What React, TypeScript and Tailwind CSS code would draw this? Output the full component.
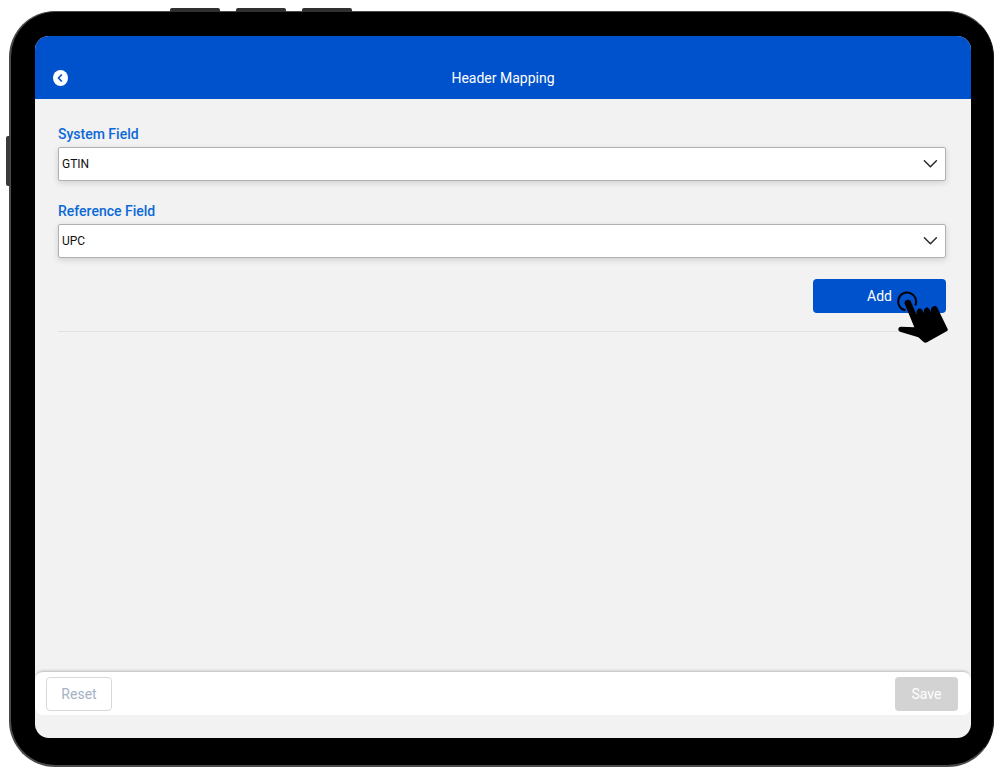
import React, { useId, useState } from 'react';

type SelectFieldProps = {
  label: string;
  value: string;
  options: string[];
  onChange: (value: string) => void;
};

const SYSTEM_FIELDS = ['GTIN', 'Description', 'Quantity'];
const REFERENCE_FIELDS = ['UPC', 'Item Name', 'Count'];

const BackIcon = () => (
  <svg viewBox="0 0 15 16" className="h-4 w-[15px]" aria-hidden="true">
    <ellipse cx="7.5" cy="8" rx="7.5" ry="8" fill="#fff" />
    <path d="M8.4 5 5.4 8l3 3" fill="none" stroke="#0052cc" strokeWidth="1.7" strokeLinecap="round" strokeLinejoin="round" />
  </svg>
);

const ChevronIcon = () => (
  <svg
    viewBox="0 0 16 8"
    className="pointer-events-none absolute right-2 top-1/2 h-2 w-4 -translate-y-1/2"
    aria-hidden="true"
  >
    <path d="M2.4 .8 8.4 6.8l6-6" fill="none" stroke="#2b2b2b" strokeWidth="1.5" strokeLinecap="round" strokeLinejoin="round" />
  </svg>
);

// Pointing hand that sits over the Add button
const TapCursor = () => (
  <svg
    viewBox="48 45 156 159"
    className="pointer-events-none absolute -right-0.5 top-[11px] h-[53px] w-[52px]"
    aria-hidden="true"
  >
    <path d="M76 106A27 27 0 1 1 106 91" fill="none" stroke="#000" strokeWidth="6" />
    <path
      d="M74 86C71 75 88 70 93 80L109 118C107 100 122 96 127 106L132 115C128 97 144 93 148 103L153 111C149 94 167 88 172 98L203 162Q204 167 200 169L141 202Q135 205 130 200L115 187L60 170Q54 168 55 161Q56 155 63 155L103 157Z"
      fill="#000"
    />
  </svg>
);

const SelectField = ({ label, value, options, onChange }: SelectFieldProps) => {
  const id = useId();
  return (
    <div className="flex flex-col gap-0.5">
      <label htmlFor={id} className="text-sm leading-[22px] font-medium text-[#0b69d8]">
        {label}
      </label>
      <div className="relative">
        <select
          id={id}
          value={value}
          onChange={(e) => onChange(e.target.value)}
          className="block h-[34px] w-full appearance-none rounded-xs border border-[#b0b0b0] bg-white pl-[3px] pr-8 text-xs text-[#111] shadow-[0_2px_6px_rgba(0,0,0,0.14)]"
        >
          {options.map((option) => (
            <option key={option}>{option}</option>
          ))}
        </select>
        <ChevronIcon />
      </div>
    </div>
  );
};

export default function App() {
  const [systemField, setSystemField] = useState('GTIN');
  const [referenceField, setReferenceField] = useState('UPC');

  return (
    <div className="flex min-h-screen bg-white pt-[11px] pr-1.5 pb-[7px] pl-[9px] font-['Roboto','Liberation_Sans',sans-serif]">
      <div className="relative flex flex-1 rounded-[46px] border-t border-l-2 border-b-2 border-[#4a4a4a] border-r border-r-[#141414] bg-black pt-6 pr-[22px] pb-[27px] pl-6">
        {/* Hardware buttons */}
        <div className="absolute -top-1 left-[159px] flex gap-4">
          <span className="h-1 w-[50px] rounded-t-xs bg-[#303030]" />
          <span className="h-1 w-[50px] rounded-t-xs bg-[#303030]" />
          <span className="h-1 w-[50px] rounded-t-xs bg-[#303030]" />
        </div>
        <span className="absolute top-[124px] -left-[5px] h-[50px] w-1 rounded-l-xs bg-[#3a3a3a]" />

        <div className="flex flex-1 flex-col overflow-hidden rounded-[14px] bg-[#f2f2f2]">
          <header className="grid h-[63px] grid-cols-[1fr_auto_1fr] items-center bg-[#0052cc] px-[18px] pt-5">
            <button type="button" aria-label="Back" className="justify-self-start">
              <BackIcon />
            </button>
            <h1 className="text-sm text-white">Header Mapping</h1>
          </header>

          <main className="flex-1 pt-6 pr-[25px] pl-[23px]">
            <div className="flex flex-col gap-[19px]">
              <SelectField label="System Field" value={systemField} options={SYSTEM_FIELDS} onChange={setSystemField} />
              <SelectField label="Reference Field" value={referenceField} options={REFERENCE_FIELDS} onChange={setReferenceField} />
            </div>
            <div className="mt-[21px] flex justify-end">
              <div className="relative">
                <button type="button" className="block h-[34px] w-[133px] rounded bg-[#0052cc] text-sm text-white">
                  Add
                </button>
                <TapCursor />
              </div>
            </div>
            <hr className="mt-[18px] border-[#e2e2e2]" />
          </main>

          <footer className="mb-[23px] flex items-center justify-between rounded-lg bg-white pt-[5px] pr-[13px] pb-1 pl-[11px] shadow-[0_-2px_3px_-1px_rgba(0,0,0,0.25)]">
            <button type="button" className="h-[34px] w-[66px] rounded border border-[#d5d8dc] bg-white text-sm text-[#a5b1c2]">
              Reset
            </button>
            <button type="button" disabled className="h-[34px] w-[63px] rounded bg-[#d3d3d3] text-sm text-white">
              Save
            </button>
          </footer>
        </div>
      </div>
    </div>
  );
}
